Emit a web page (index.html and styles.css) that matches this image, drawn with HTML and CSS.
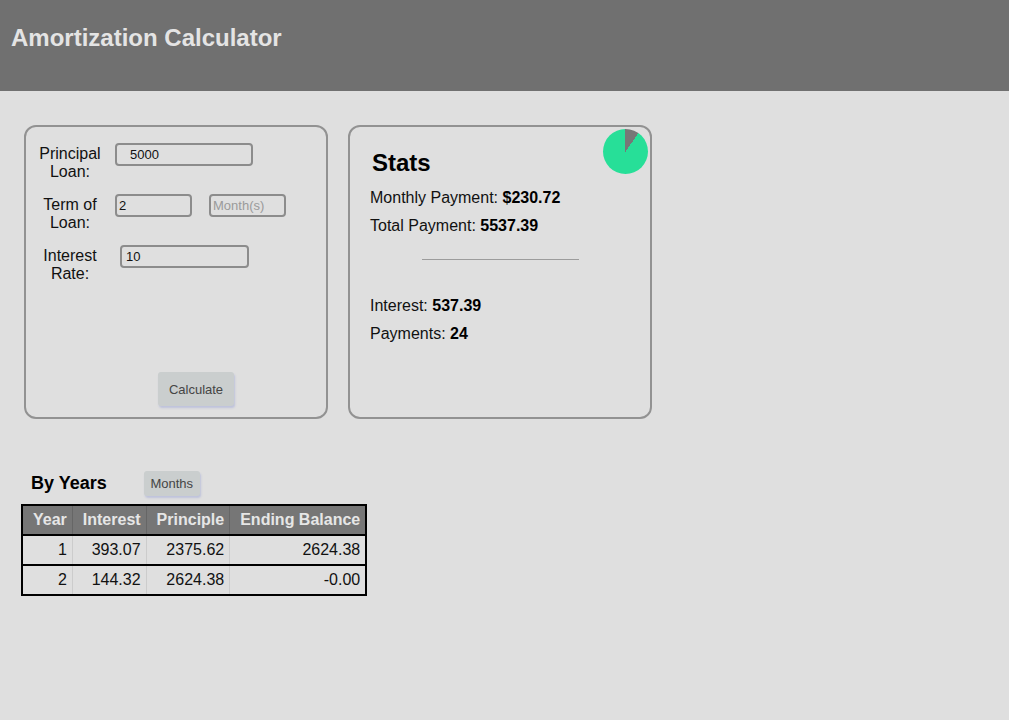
FILE: index.html
```html
<!DOCTYPE html>
<html lang="en">
<head>
<meta charset="utf-8">
<title>Amortization Calculator</title>
<link rel="stylesheet" href="styles.css">
</head>
<body>
<header class="topbar">
  <h1 class="title">Amortization Calculator</h1>
</header>
<main>
  <section class="cards">
    <div class="card form-card">
      <div class="row">
        <label class="lbl">Principal Loan:</label>
        <input class="inp inp-principal" type="text" value="5000">
      </div>
      <div class="row">
        <label class="lbl">Term of Loan:</label>
        <input class="inp inp-term" type="text" value="2">
        <input class="inp inp-unit" type="text" placeholder="Month(s)">
      </div>
      <div class="row">
        <label class="lbl">Interest Rate:</label>
        <input class="inp inp-rate" type="text" value="10">
      </div>
      <button class="btn btn-calc" type="button">Calculate</button>
    </div>
    <div class="card stats-card">
      <div class="pie"></div>
      <h2 class="stats-title">Stats</h2>
      <p class="stat">Monthly Payment: <b>$230.72</b></p>
      <p class="stat">Total Payment: <b>5537.39</b></p>
      <hr class="divider">
      <p class="stat">Interest: <b>537.39</b></p>
      <p class="stat">Payments: <b>24</b></p>
    </div>
  </section>
  <section class="years">
    <div class="years-head">
      <h3 class="years-title">By Years</h3>
      <button class="btn btn-months" type="button">Months</button>
    </div>
    <table class="sched">
      <thead>
        <tr><th>Year</th><th>Interest</th><th>Principle</th><th>Ending Balance</th></tr>
      </thead>
      <tbody>
        <tr><td>1</td><td>393.07</td><td>2375.62</td><td>2624.38</td></tr>
        <tr><td>2</td><td>144.32</td><td>2624.38</td><td>-0.00</td></tr>
      </tbody>
    </table>
  </section>
</main>
</body>
</html>
```
FILE: styles.css
```css
* { box-sizing: border-box; }
body {
  margin: 0;
  background: #dfdfdf;
  font-family: "Liberation Sans", Arial, sans-serif;
  color: #111;
}
.topbar {
  height: 91px;
  background: #707070;
  padding: 24px 0 0 11px;
}
.title {
  margin: 0;
  font-size: 24px;
  line-height: 28px;
  font-weight: bold;
  color: #e4e4e4;
}
.cards {
  display: flex;
  gap: 20px;
  padding: 34px 0 0 24px;
}
.card {
  width: 304px;
  height: 294px;
  border: 2px solid #929292;
  border-radius: 12px;
  position: relative;
}
.form-card {
  display: flex;
  flex-direction: column;
  padding: 16px 10px 11px 9px;
}
.row {
  display: flex;
  align-items: flex-start;
  height: 51px;
}
.lbl {
  width: 70px;
  margin-top: 2px;
  text-align: center;
  font-size: 16px;
  line-height: 18px;
  color: #111;
}
.inp {
  height: 23px;
  border: 2px solid #8c8c8c;
  border-radius: 4px;
  background: transparent;
  font-family: "Liberation Sans", Arial, sans-serif;
  font-size: 13px;
  color: #111;
  padding: 0 2px;
  outline: none;
}
.inp::placeholder { color: #9a9a9a; }
.inp-principal { width: 138px; margin-left: 10px; padding-left: 13px; }
.inp-term { width: 77px; margin-left: 10px; }
.inp-unit { width: 77px; margin-left: 17px; }
.inp-rate { width: 129px; margin-left: 15px; padding-left: 4px; }
.btn {
  border: none;
  border-radius: 3px;
  background: #cacece;
  color: #454545;
  font-family: "Liberation Sans", Arial, sans-serif;
  font-size: 13px;
  box-shadow: 1px 2px 2px rgba(150, 160, 215, 0.45);
  padding: 0;
}
.btn-calc {
  width: 76px;
  height: 34px;
  margin-top: auto;
  margin-left: 123px;
  align-self: flex-start;
}
.stats-card {
  padding: 22px 20px 0 20px;
}
.pie {
  position: absolute;
  top: 2px;
  right: 2px;
  width: 45px;
  height: 45px;
  border-radius: 50%;
  background: conic-gradient(#777777 0deg 35deg, #27df98 35deg 360deg);
}
.stats-title {
  margin: 0 0 7px 2px;
  font-size: 24px;
  line-height: 27.6px;
  font-weight: bold;
  color: #000;
}
.stat {
  margin: 0;
  font-size: 16px;
  line-height: 28px;
  color: #111;
}
.stat b { color: #000; }
.divider {
  width: 157px;
  height: 0;
  margin: 19px auto 32px auto;
  border: 0;
  border-top: 1px solid #9c9c9c;
}
.years {
  padding: 52px 0 0 21px;
}
.years-head {
  display: flex;
  align-items: center;
  gap: 37px;
  padding-left: 10px;
  margin-bottom: 8px;
}
.years-title {
  margin: 0;
  font-size: 18px;
  font-weight: bold;
  color: #000;
}
.btn-months {
  width: 56px;
  height: 25px;
}
.sched {
  border-collapse: collapse;
  border: 2px solid #000;
  font-size: 16px;
  line-height: 18px;
}
.sched th {
  background: #767676;
  color: #e6e6e6;
  font-weight: bold;
  padding: 5px 5px 5px 10px;
  text-align: right;
  border-left: 1px solid #666;
}
.sched td {
  padding: 5px 5px 5px 10px;
  text-align: right;
  border-left: 1px solid #cccccc;
  color: #111;
}
.sched th:first-child, .sched td:first-child { border-left: none; }
.sched tr { border-top: 2px solid #000; }
.sched thead tr { border-top: none; }
```
